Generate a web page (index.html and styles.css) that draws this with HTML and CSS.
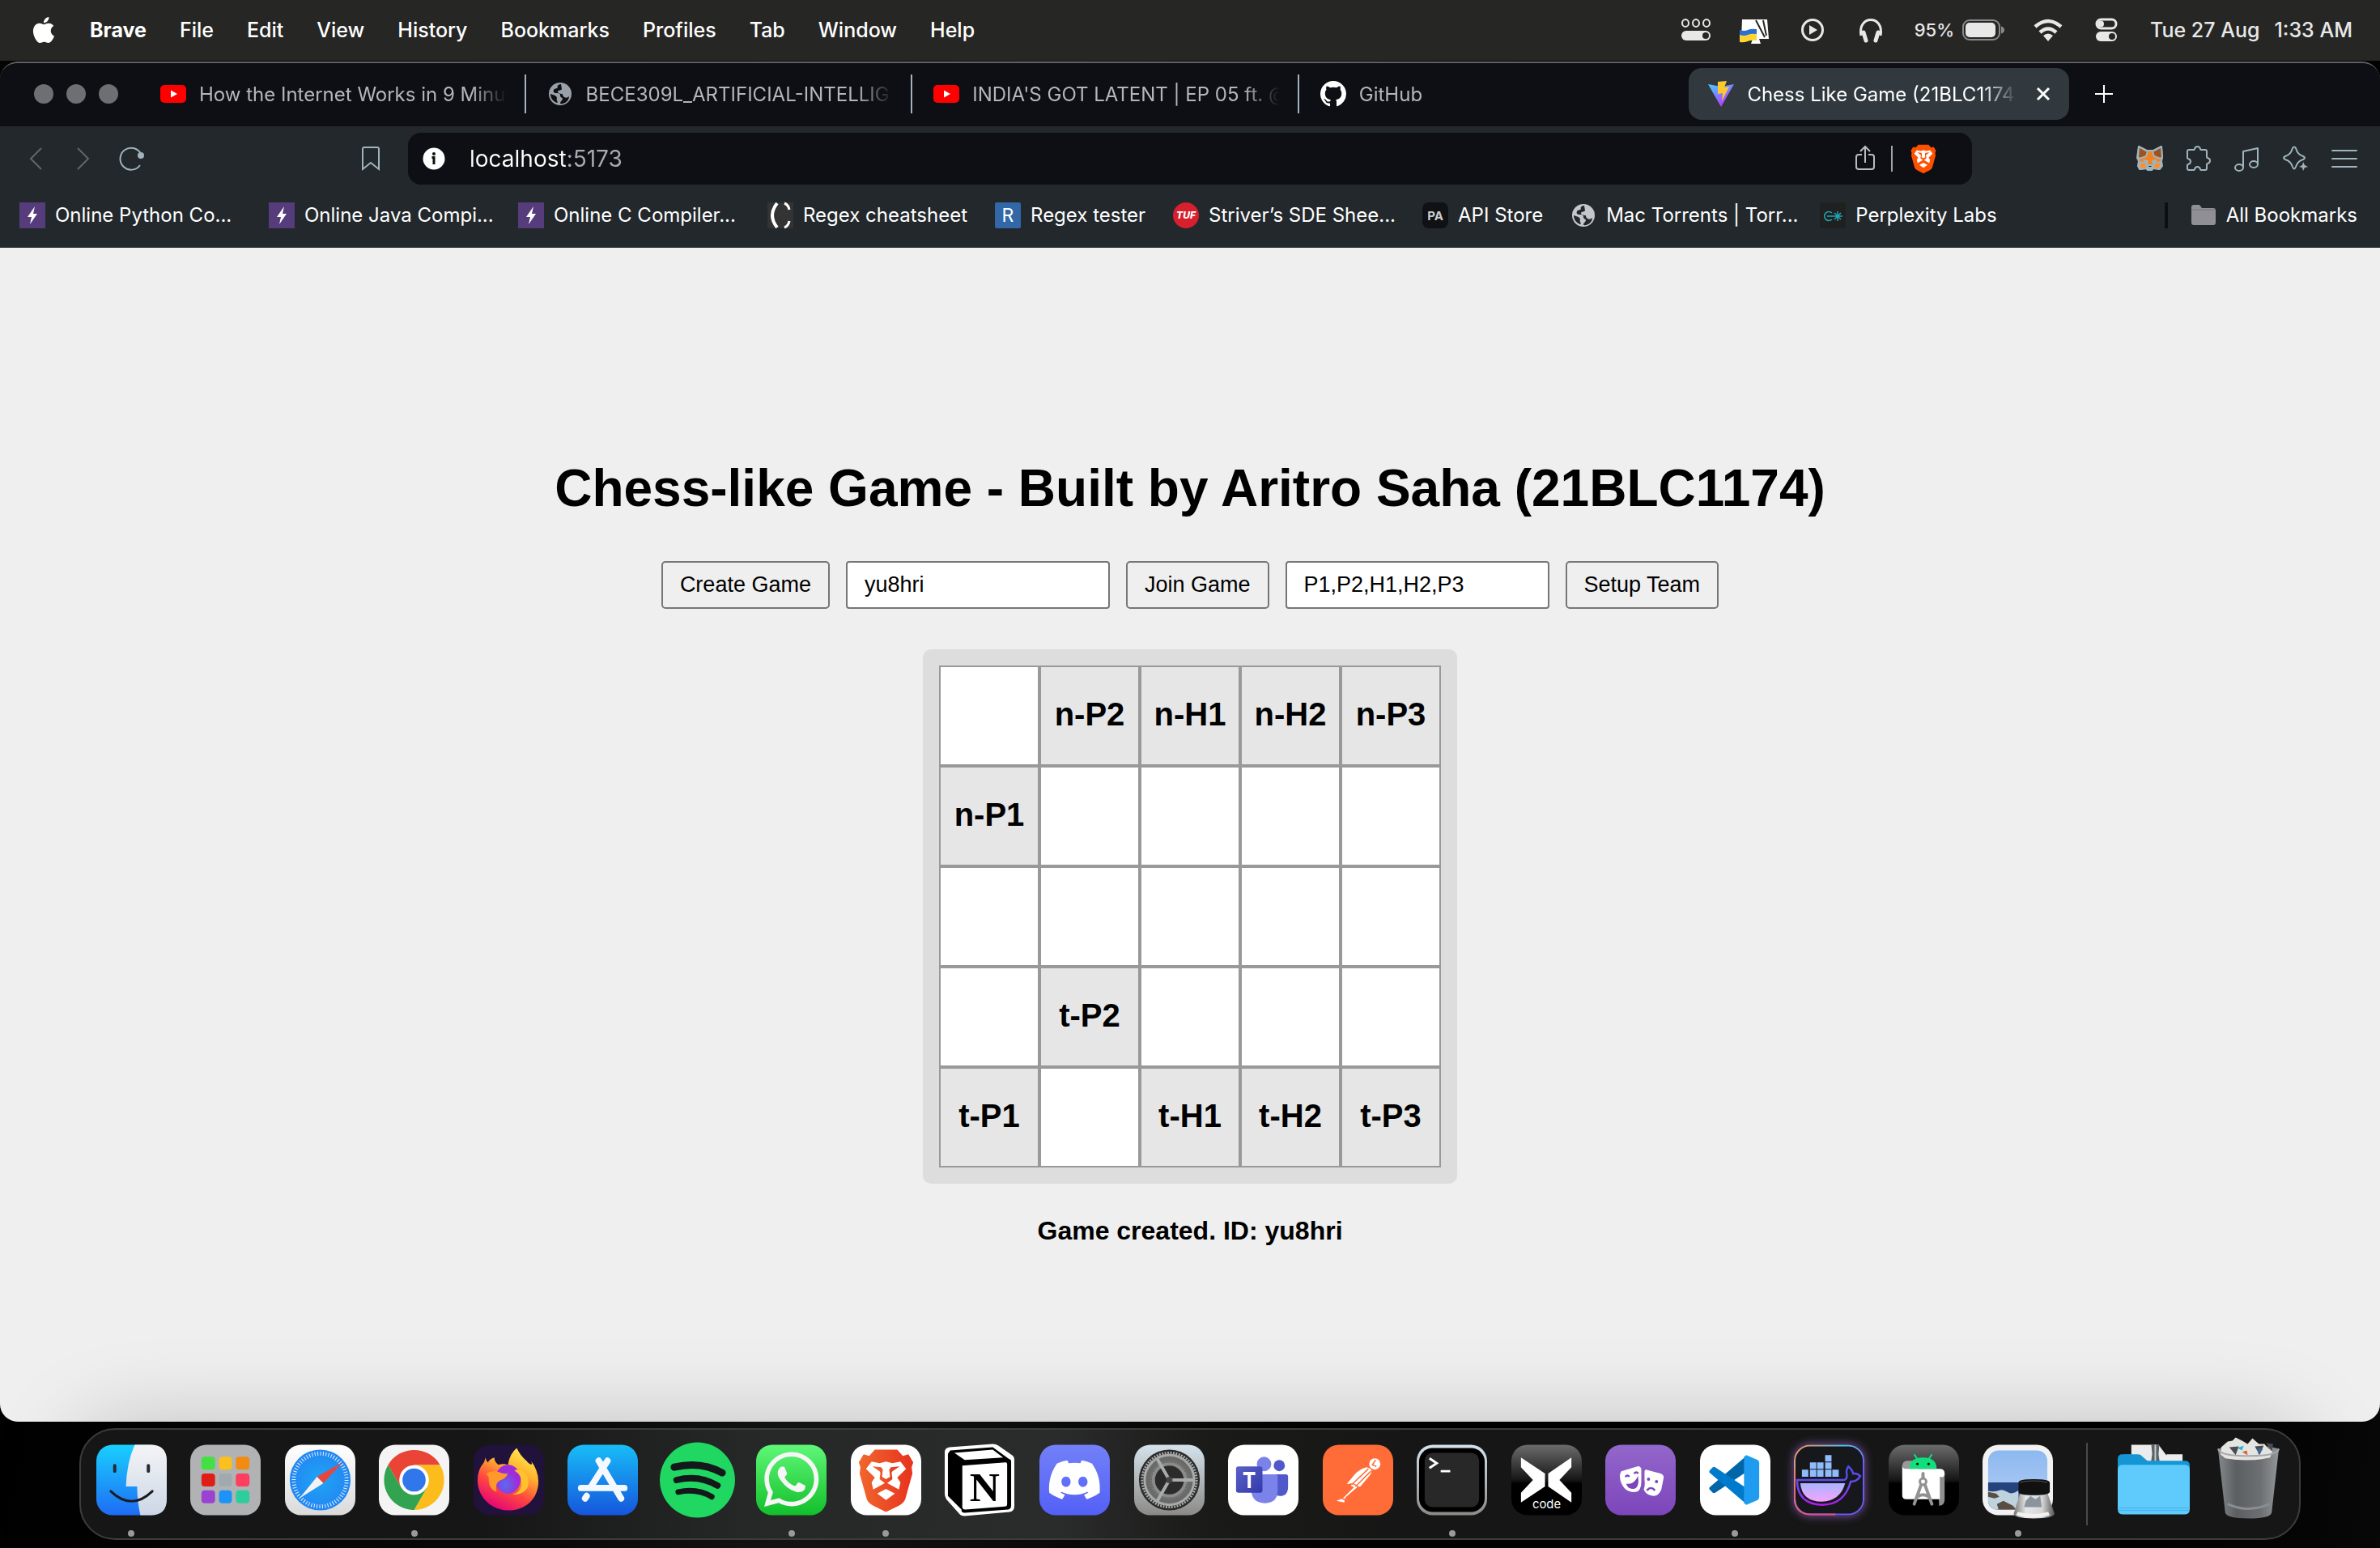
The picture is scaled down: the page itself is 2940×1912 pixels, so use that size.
FILE: index.html
```html
<!DOCTYPE html>
<html lang="en">
<head>
<meta charset="utf-8">
<title>Chess Like Game (21BLC1174)</title>
<link rel="stylesheet" href="styles.css">
</head>
<body>
<svg class="sprite" aria-hidden="true">
  <defs>
    <symbol id="youtube" viewBox="0 0 32 32"><rect y="5" width="32" height="22" rx="5" fill="#f00"/><path d="M13 11.500 21 16l-8 4.500z" fill="#fff"/></symbol>
    <symbol id="globe" viewBox="0 0 32 32"><circle cx="16" cy="16" r="14" fill="currentColor"/><path d="M17 4c-4 0-5 3-4 4s-4 1-5 3 0 4 3 4 5 0 5 3 3 2 3 4-3 3-3 6c6 1 11-4 11-9 0 0-3 3-6 1s-1-4-3-4-5-1-5-3 5-1 5-3z" fill="var(--hole)"/><path d="M4 16c2 1 5 1 7 3s0 3 1 5 1 3 0 3c-5-2-8-6-8-11z" fill="var(--hole)"/></symbol>
    <symbol id="bolt" viewBox="0 0 32 32"><path d="M0 0h32v32H0z" fill="#573c7c"/><path d="m19 5-9 13h5l-2 9 9-13h-5z" fill="#fff"/></symbol>
    <symbol id="lion" viewBox="0 0 88 88">
      <path d="M30 6h28l7 8 7-2 6 10-2 6 1 8-9 32q-2 5-8 8L44 84 28 76q-6-3-8-8l-9-32 1-8-2-6 6-10 7 2z" fill="var(--mane)"/>
      <path d="m26 21 10 2 8-2 8 2 10-2 7 9-11 11 4 6-2 9-16-9-16 9-2-9 4-6-11-11z" fill="var(--face)"/>
      <path d="m44 55 11 6-11 8-11-8z" fill="var(--face)"/>
      <path d="m27 27 11 1 2 3-1 9 5 3 5-3-1-9 2-3 11-1-9 6-1 2 1 8-8 6-8-6 1-8-1-2z" fill="var(--mane)"/>
    </symbol>
    <linearGradient id="gMane"><stop offset="0" stop-color="#f1672d"/><stop offset="1" stop-color="#e7321e"/></linearGradient>
    <linearGradient id="gFinder" x2="0" y2="1"><stop offset="0" stop-color="#19d0ff"/><stop offset="1" stop-color="#1e6cf5"/></linearGradient>
    <linearGradient id="gFace" x2="0" y2="1"><stop offset="0" stop-color="#f4f4f6"/><stop offset="1" stop-color="#ccd7e6"/></linearGradient>
    <linearGradient id="gWhite" x2="0" y2="1"><stop offset="0" stop-color="#fff"/><stop offset="1" stop-color="#dadada"/></linearGradient>
    <radialGradient id="gSafari"><stop offset="0" stop-color="#1ea5f5"/><stop offset="1" stop-color="#2386f2"/></radialGradient>
    <linearGradient id="gFox" x1=".8" y1="0" x2=".3" y2="1"><stop offset="0" stop-color="#fff44f"/><stop offset=".35" stop-color="#ffb02e"/><stop offset=".65" stop-color="#ff4a3d"/><stop offset="1" stop-color="#e3007c"/></linearGradient>
    <radialGradient id="gFoxCore" cx=".4" cy=".7"><stop offset="0" stop-color="#5a6bf0"/><stop offset="1" stop-color="#a02bd8"/></radialGradient>
    <linearGradient id="gStore" x2="0" y2="1"><stop offset="0" stop-color="#18bdf8"/><stop offset="1" stop-color="#1655dc"/></linearGradient>
    <linearGradient id="gWa" x2="0" y2="1"><stop offset="0" stop-color="#5ff777"/><stop offset="1" stop-color="#12bf2b"/></linearGradient>
    <linearGradient id="gDiscord" x2="0" y2="1"><stop offset="0" stop-color="#7380f8"/><stop offset="1" stop-color="#5360f6"/></linearGradient>
    <linearGradient id="gSteel" x2="0" y2="1"><stop offset="0" stop-color="#d5e3ec"/><stop offset="1" stop-color="#8c8a87"/></linearGradient>
    <linearGradient id="gTeams" x2="1" y2="1"><stop offset="0" stop-color="#5a62c9"/><stop offset="1" stop-color="#3339a8"/></linearGradient>
    <linearGradient id="gGloss" x2="0" y2="1"><stop offset="0" stop-color="#6c6c6c"/><stop offset=".5" stop-color="#161616"/><stop offset=".55" stop-color="#000"/></linearGradient>
    <linearGradient id="gPurple" x2="0" y2="1"><stop offset="0" stop-color="#9367cb"/><stop offset="1" stop-color="#7d45bb"/></linearGradient>
    <linearGradient id="gNeon" x2="1" y2="1"><stop offset="0" stop-color="#ff8c5a"/><stop offset=".35" stop-color="#5cc4f4"/><stop offset=".65" stop-color="#6a5cf0"/><stop offset="1" stop-color="#6a5cf0"/></linearGradient>
    <linearGradient id="gNeonSide" x2="0" y2="1"><stop offset="0" stop-color="#e88a68"/><stop offset="1" stop-color="#e0508c"/></linearGradient>
    <linearGradient id="gHull" x2="0" y2="1"><stop offset="0" stop-color="#a9b4ff"/><stop offset="1" stop-color="#f3a4ff"/></linearGradient>
    <linearGradient id="gHullLine" x2="0" y2="1"><stop offset="0" stop-color="#4a4cf0"/><stop offset=".5" stop-color="#6a4af4"/><stop offset="1" stop-color="#b31bf0"/></linearGradient>
    <linearGradient id="gSky" x2="0" y2="1"><stop offset="0" stop-color="#8db9f0"/><stop offset="1" stop-color="#b4cdf3"/></linearGradient>
    <linearGradient id="gBin"><stop offset="0" stop-color="#85898c"/><stop offset=".3" stop-color="#5b5f62"/><stop offset=".7" stop-color="#6c7073"/><stop offset="1" stop-color="#93979a"/></linearGradient>
    <linearGradient id="gGlass"><stop offset="0" stop-color="#777"/><stop offset=".3" stop-color="#e6e6e6"/><stop offset=".7" stop-color="#d5d5d5"/><stop offset="1" stop-color="#555"/></linearGradient>
  </defs>
</svg>

<div class="desktop">
  <header class="menubar">
    <nav class="menus" aria-label="Menu bar">
      <a href="#" class="apple" aria-label="Apple menu"><svg width="32" height="32" viewBox="0 0 24 24" fill="#fff"><path d="M12.152 6.896c-.948 0-2.415-1.078-3.960-1.040-2.040.027-3.910 1.183-4.961 3.014-2.117 3.675-.546 9.103 1.519 12.090 1.013 1.454 2.208 3.090 3.792 3.039 1.520-.065 2.090-.987 3.935-.987 1.831 0 2.350.987 3.960.948 1.637-.026 2.676-1.480 3.676-2.948 1.156-1.688 1.636-3.325 1.662-3.415-.039-.013-3.182-1.221-3.220-4.857-.026-3.040 2.480-4.494 2.597-4.559-1.429-2.090-3.623-2.324-4.390-2.376-2-.156-3.675 1.090-4.610 1.090zM15.530 3.830c.843-1.012 1.400-2.427 1.245-3.830-1.207.052-2.662.805-3.532 1.818-.780.896-1.454 2.338-1.273 3.714 1.338.104 2.715-.688 3.559-1.701"/></svg></a>
      <a href="#" class="app-name">Brave</a>
      <a href="#">File</a>
      <a href="#">Edit</a>
      <a href="#">View</a>
      <a href="#">History</a>
      <a href="#">Bookmarks</a>
      <a href="#">Profiles</a>
      <a href="#">Tab</a>
      <a href="#">Window</a>
      <a href="#">Help</a>
    </nav>
    <div class="status-items">
      <svg class="status-icon" viewBox="0 0 36 36" fill="none" stroke="#e8e8e8" stroke-width="2"><ellipse cx="5" cy="9.500" rx="4" ry="4.500"/><ellipse cx="18" cy="9.500" rx="4" ry="4.500"/><ellipse cx="31" cy="9.500" rx="4" ry="4.500"/><rect x="0" y="19" width="36" height="12" rx="6" fill="#e8e8e8" stroke="none"/><circle cx="30" cy="25" r="4" fill="#262625" stroke="none"/></svg>
      <svg class="status-icon" viewBox="0 0 36 36"><path d="M3 5h31l2 24H24l2 6H14l2-6H2z" fill="#fff"/><path d="m20 6 11 21M29 6l4 19" stroke="#262625" stroke-width="2"/><path d="M0 18q6 2 10 0t11-1v9q-6-1-11 0T0 26z" fill="#2d6fd0"/><path d="M0 24q6 2 10 0t11-1v8q-6-1-11 1T0 33z" fill="#fbd633"/></svg>
      <svg class="status-icon" viewBox="0 0 36 36"><circle cx="18" cy="18" r="12.500" fill="none" stroke="#e8e8e8" stroke-width="3"/><path d="m14 12 10 6-10 6z" fill="#e8e8e8"/></svg>
      <svg class="status-icon" viewBox="0 0 36 36" fill="none" stroke="#e8e8e8" stroke-width="3"><path d="M6 25c-5-26 29-26 24 0"/><path d="m9 21 3 10M27 21l-3 10" stroke-width="5" stroke-linecap="round"/></svg>
      <div class="battery"><span>95%</span><svg width="52" height="26" viewBox="0 0 52 26"><rect x="1" y="1" width="45" height="24" rx="8" fill="none" stroke="#8a8a8a" stroke-width="2"/><rect x="4" y="4" width="37" height="18" rx="5" fill="#e8e8e8"/><path d="M48 8.500q4 1 4 4.500t-4 4.500z" fill="#8a8a8a"/></svg></div>
      <svg class="status-icon" viewBox="0 0 36 36" fill="none" stroke="#e8e8e8" stroke-width="4.500"><path d="M2 14q16-14 32 0M8 21q10-9 20 0"/><path d="m18 32-6-7q6-5 12 0z" fill="#e8e8e8" stroke="none"/></svg>
      <svg class="status-icon" viewBox="0 0 36 36"><rect x="6" y="5" width="24" height="11" rx="5.500" fill="none" stroke="#e8e8e8" stroke-width="3"/><circle cx="11" cy="10.500" r="4" fill="#e8e8e8"/><rect x="5" y="20" width="26" height="12" rx="6" fill="#e8e8e8"/><circle cx="25" cy="26" r="4" fill="#262625"/></svg>
      <time class="clock"><span>Tue 27 Aug</span><span>1:33 AM</span></time>
    </div>
  </header>

  <section class="window" aria-label="Brave">
    <div class="tabstrip">
      <div class="lights">
        <button aria-label="Close"></button><button aria-label="Minimise"></button><button aria-label="Zoom"></button>
      </div>
      <nav class="tabs" aria-label="Tabs">
        <a href="#" class="tab"><svg class="fav"><use href="#youtube"/></svg><span class="tab-title">How the Internet Works in 9 Minut</span></a>
        <a href="#" class="tab"><svg class="fav globe-dim"><use href="#globe"/></svg><span class="tab-title">BECE309L_ARTIFICIAL-INTELLIG</span></a>
        <a href="#" class="tab"><svg class="fav"><use href="#youtube"/></svg><span class="tab-title">INDIA'S GOT LATENT | EP 05 ft. @</span></a>
        <a href="#" class="tab last"><svg class="fav" viewBox="0 0 16 16" fill="#fff"><path d="M8 0C3.580 0 0 3.580 0 8c0 3.540 2.290 6.530 5.470 7.590.400.070.550-.170.550-.380 0-.190-.010-.820-.010-1.490-2.010.370-2.530-.490-2.690-.940-.090-.230-.480-.940-.820-1.130-.280-.150-.680-.520-.010-.530.630-.010 1.080.580 1.230.820.720 1.210 1.870.870 2.330.660.070-.520.280-.870.510-1.070-1.780-.200-3.640-.890-3.640-3.950 0-.870.310-1.590.820-2.150-.080-.200-.360-1.020.080-2.120 0 0 .670-.210 2.200.820.640-.180 1.320-.270 2-.270.680 0 1.360.090 2 .270 1.530-1.040 2.200-.820 2.200-.820.440 1.100.160 1.920.080 2.120.510.560.820 1.270.820 2.150 0 3.070-1.870 3.750-3.650 3.950.290.250.540.730.540 1.480 0 1.070-.010 1.930-.010 2.200 0 .210.150.460.550.380A8.013 8.013 0 0016 8c0-4.420-3.580-8-8-8z"/></svg><span class="tab-title">GitHub</span></a>
        <div class="tab active">
          <svg class="fav" viewBox="0 0 32 32"><defs><linearGradient id="gVite" x2=".6" y2="1"><stop offset="0" stop-color="#41d1ff"/><stop offset="1" stop-color="#bd34fe"/></linearGradient></defs><path d="m0 4 16 28L32 4 16 7z" fill="url(#gVite)"/><path d="m12 1 11-1-3 8 6-1-9 18 1-10-6 1z" fill="#ffc92e"/></svg>
          <span class="tab-title">Chess Like Game (21BLC1174</span>
          <button class="tab-close" aria-label="Close tab"><svg width="16" height="16" viewBox="0 0 16 16" stroke="#fff" stroke-width="3"><path d="m1 1 14 14M15 1 1 15"/></svg></button>
        </div>
      </nav>
      <button class="new-tab" aria-label="New tab"><svg width="22" height="22" viewBox="0 0 22 22" stroke="#fff" stroke-width="2"><path d="M11 0v22M0 11h22"/></svg></button>
    </div>

    <div class="toolbar">
      <div class="nav-buttons">
        <button class="tool dim" aria-label="Back"><svg viewBox="0 0 32 32"><path d="M23 3 10 16l13 13"/></svg></button>
        <button class="tool dim" aria-label="Forward"><svg viewBox="0 0 32 32"><path d="m9 3 13 13L9 29"/></svg></button>
        <button class="tool" aria-label="Reload"><svg viewBox="0 0 32 32"><path d="M28 10A13.500 13.500 0 1 0 27 24"/><circle cx="28" cy="12" r="3" fill="currentColor"/></svg></button>
      </div>
      <button class="tool" aria-label="Bookmark this page"><svg viewBox="0 0 32 32"><path d="M6 4q0-2 2-2h16q2 0 2 2v25l-10-8-10 8z"/></svg></button>
      <div class="address">
        <svg width="28" height="28" viewBox="0 0 28 28"><circle cx="14" cy="14" r="13.500" fill="#fff"/><circle cx="14" cy="8" r="2" fill="#0e0f14"/><path d="M11.500 12.500H14V21" stroke="#0e0f14" stroke-width="3" fill="none"/></svg>
        <input class="url" type="text" value="localhost:5173" aria-label="Address">
        <button class="tool share" aria-label="Share"><svg viewBox="0 0 32 32"><path d="M12 11H8q-3 0-3 3v12q0 3 3 3h16q3 0 3-3V14q0-3-3-3h-4M16 21V2M10 7l6-6 6 6"/></svg></button>
        <span class="address-rule"></span>
        <button class="shield" aria-label="Brave Shields"><svg width="40" height="40"><use href="#lion"/></svg></button>
      </div>
      <div class="extensions">
        <button class="tool" aria-label="MetaMask"><svg viewBox="0 0 32 32" stroke="none"><path d="m2 1 10 5h8l10-5 1 14-1 4 1 6-3 4-7-2-3 3h-5l-3-3-7 2-2-4 1-6-2-4z" fill="#f28220"/><path d="m2 1 11 6-2 6-8 3-2-2zM30 1 19 7l2 6 8 3 2-2z" fill="#9c5324"/><path d="m3 20 9 2v6l-7 1-2-4zM29 20l-9 2v6l7 1 2-4z" fill="#ff8d2a"/><path d="m8 18 5 1-1 2zM24 18l-5 1 1 2z" fill="#5a4a4a"/><path d="m11 25 2-1h6l2 1-3 4h-4z" fill="#d8c3b6"/><path d="M13 24h6l-1 3h-4z" fill="#161616"/></svg></button>
        <button class="tool" aria-label="Extensions"><svg viewBox="0 0 32 32"><path d="M4 5h6q1 0 1-1c1-4 6-4 7 0q0 1 1 1h5q2 0 2 2v7q0 1 1 1c4 1 4 6 0 7q-1 0-1 1v5q0 2-2 2h-5q-1 0-1-1c-1-4-6-4-7 0q0 1-1 1H4q-2 0-2-2v-4q0-1 1-1c4-1 4-6 0-7q-1 0-1-1V7q0-2 2-2z"/></svg></button>
        <button class="tool" aria-label="Playlist"><svg viewBox="0 0 32 32"><ellipse cx="6" cy="27" rx="5" ry="4"/><ellipse cx="24" cy="23" rx="5" ry="4"/><path d="M11 27V7l18-4v20M11 12"/></svg></button>
        <button class="tool" aria-label="Leo AI"><svg viewBox="0 0 32 32"><path d="M12 3q2-3 4 0 2 8 9 10 4 2 0 4-7 2-9 9-2 5-4 0-2-7-9-9-4-2 0-4 7-2 9-10z"/><path d="M25 20l2 4 4 2-4 1-2 4-1-4-4-1 4-2z" fill="currentColor" stroke="none"/></svg></button>
        <button class="tool" aria-label="Menu"><svg viewBox="0 0 32 32"><path d="M1 6h30M1 16h30M1 26h30"/></svg></button>
      </div>
    </div>

    <nav class="bookmarks" aria-label="Bookmarks">
      <a href="#" class="long"><svg class="fav"><use href="#bolt"/></svg>Online Python Co...</a>
      <a href="#" class="long"><svg class="fav"><use href="#bolt"/></svg>Online Java Compi...</a>
      <a href="#" class="long"><svg class="fav"><use href="#bolt"/></svg>Online C Compiler...</a>
      <a href="#"><svg class="fav" viewBox="0 0 32 32"><path d="M0 0h32v32H0z" fill="#333"/><path d="M12 1Q0 16 12 31" fill="none" stroke="#fff" stroke-width="4"/><path d="M21 1q5 2 6 8M27 23q-1 6-6 8" fill="none" stroke="#fff" stroke-width="3"/></svg>Regex cheatsheet</a>
      <a href="#"><svg class="fav" viewBox="0 0 32 32"><rect width="32" height="32" rx="2" fill="#3267a8"/><text x="16" y="24" text-anchor="middle" font-size="23" fill="#fff">R</text></svg>Regex tester</a>
      <a href="#" class="long"><svg class="fav" viewBox="0 0 32 32"><circle cx="16" cy="16" r="16" fill="#d71f2e"/><text x="16" y="20" text-anchor="middle" font-size="12" font-weight="800" font-style="italic" fill="#fff">TUF</text></svg>Striver’s SDE Shee...</a>
      <a href="#"><svg class="fav" viewBox="0 0 32 32"><rect width="32" height="32" rx="8" fill="#101114"/><text x="16" y="22" text-anchor="middle" font-size="15" font-weight="700" fill="#ccc">PA</text></svg>API Store</a>
      <a href="#" class="long"><svg class="fav globe-light"><use href="#globe"/></svg>Mac Torrents | Torr...</a>
      <a href="#"><svg class="fav" viewBox="0 0 32 32" fill="none" stroke="#20a5b5" stroke-width="1.500"><path d="M0 0h32v32H0z" fill="#202020" stroke="none"/><path d="M15 13a5.500 5.500 0 1 0 0 8M9 17h19M22 11v12M18 13l8 8M26 13l-8 8"/></svg>Perplexity Labs</a>
      <span class="bookmark-rule"></span>
      <a href="#"><svg class="fav" viewBox="0 0 32 32"><path d="M1 6q0-3 3-3h7l3 4h14q3 0 3 3v15q0 3-3 3H4q-3 0-3-3z" fill="#8f8f95"/><path d="M1 9h30" stroke="#77777c"/></svg>All Bookmarks</a>
    </nav>

    <main class="page">
      <h1>Chess-like Game - Built by Aritro Saha (21BLC1174)</h1>
      <form class="controls">
        <button type="button">Create Game</button>
        <input type="text" value="yu8hri" aria-label="Game ID">
        <button type="button">Join Game</button>
        <input type="text" value="P1,P2,H1,H2,P3" aria-label="Team">
        <button type="button">Setup Team</button>
      </form>
      <div class="board">
        <div class="cell"></div><div class="cell piece">n-P2</div><div class="cell piece">n-H1</div><div class="cell piece">n-H2</div><div class="cell piece">n-P3</div>
        <div class="cell piece">n-P1</div><div class="cell"></div><div class="cell"></div><div class="cell"></div><div class="cell"></div>
        <div class="cell"></div><div class="cell"></div><div class="cell"></div><div class="cell"></div><div class="cell"></div>
        <div class="cell"></div><div class="cell piece">t-P2</div><div class="cell"></div><div class="cell"></div><div class="cell"></div>
        <div class="cell piece">t-P1</div><div class="cell"></div><div class="cell piece">t-H1</div><div class="cell piece">t-H2</div><div class="cell piece">t-P3</div>
      </div>
      <p class="message">Game created. ID: yu8hri</p>
    </main>
  </section>

  <footer class="dock">
    <div class="apps">
      <button class="app running" aria-label="Finder"><svg viewBox="0 0 88 88"><rect width="88" height="88" rx="20" fill="url(#gFinder)"/><path d="M48 0h20q20 0 20 20v48q0 20-20 20H55q-4-18-4-36H37Q38 22 48 0z" fill="url(#gFace)"/><path d="M23 26v7M65 26v7" stroke="#222b33" stroke-width="4" stroke-linecap="round"/><path d="M18 58q26 25 52 0" fill="none" stroke="#1c1c20" stroke-width="3" stroke-linecap="round"/></svg></button>
      <button class="app" aria-label="Launchpad"><svg viewBox="0 0 88 88"><rect width="88" height="88" rx="20" fill="#b1b2b3"/><rect x="14" y="15" width="17" height="16" rx="4" fill="#43e043"/><rect x="36" y="15" width="16" height="16" rx="4" fill="#fcc01c"/><rect x="57" y="15" width="17" height="16" rx="4" fill="#f28b12"/><rect x="14" y="36" width="17" height="16" rx="4" fill="#de1e17"/><rect x="36" y="36" width="16" height="16" rx="4" fill="#a0a9ad"/><rect x="57" y="36" width="17" height="16" rx="4" fill="#fd3e5e"/><rect x="14" y="57" width="17" height="16" rx="4" fill="#9c42d2"/><rect x="36" y="57" width="16" height="16" rx="4" fill="#1c93f8"/><rect x="57" y="57" width="17" height="16" rx="4" fill="#2fcd9c"/></svg></button>
      <button class="app" aria-label="Safari"><svg viewBox="0 0 88 88"><rect width="88" height="88" rx="20" fill="url(#gWhite)"/><circle cx="44" cy="44" r="38" fill="url(#gSafari)"/><circle cx="44" cy="44" r="33" fill="none" stroke="#e8f4ff" stroke-width="5" stroke-dasharray="1 2.450"/><path d="m72 22-24 26-8-8z" fill="#e8463c"/><path d="m18 67 22-27 8 8z" fill="#f2f2f2"/></svg></button>
      <button class="app running" aria-label="Chrome"><svg viewBox="0 0 88 88"><rect width="88" height="88" rx="20" fill="#f4f4f4"/><path d="M11.500 25.250a37.500 37.500 0 0 1 65 0H44L27.800 53.400z" fill="#e94435"/><path d="M76.500 25.250A37.500 37.500 0 0 1 44 81.500l16.200-28.100L44 25.250z" fill="#fbbc1c"/><path d="M44 81.500a37.500 37.500 0 0 1-32.500-56.250L27.800 53.400h32.400z" fill="#32a350"/><circle cx="44" cy="44" r="18.500" fill="#fff"/><circle cx="44" cy="44" r="14.500" fill="#2f77ea"/></svg></button>
      <button class="app" aria-label="Firefox"><svg viewBox="0 0 88 88"><rect width="88" height="88" rx="20" fill="#20123a"/><path d="M54 4q4 9 12 16 5 6 7 4 0-3-2-5 10 13 10 27c0 22-17 36-37 36S5 67 5 44q0-13 8-22l2-6q1 5 3 6 2-4 8-6 0 6 5 9 6-2 12 0 2-14 11-21z" fill="url(#gFox)"/><ellipse cx="43" cy="43" rx="16" ry="18" fill="url(#gFoxCore)"/><path d="M16 36q8-5 15-2 6 3 12 2-3 7-11 9-6 5-3 14-11-4-10-18z" fill="#ff9a2a"/><path d="M51 32q10 6 9 18-2 10-11 12 14 1 19-10 3-12-6-19-5-3-11-1z" fill="#ffc22e"/></svg></button>
      <button class="app" aria-label="App Store"><svg viewBox="0 0 88 88"><rect width="88" height="88" rx="20" fill="url(#gStore)"/><g stroke="#f4f9ff" stroke-width="8" stroke-linecap="round"><path d="M50 20 29 53M39 20l28 47M17 54h54M24 64l-2 3"/></g></svg></button>
      <button class="app" aria-label="Spotify"><svg viewBox="0 0 88 88"><circle cx="44" cy="44" r="47" fill="#1fd761"/><g fill="none" stroke="#14181a" stroke-linecap="round"><path d="M15 28q33-8 60 7" stroke-width="9"/><path d="M18 44q28-7 51 7" stroke-width="8"/><path d="M20 59q24-5 42 6" stroke-width="7"/></g></svg></button>
      <button class="app running" aria-label="WhatsApp"><svg viewBox="0 0 88 88"><rect width="88" height="88" rx="20" fill="url(#gWa)"/><path transform="translate(10 9) scale(2.850)" fill="#f6f6f6" d="M17.472 14.382c-.297-.149-1.758-.867-2.030-.967-.273-.099-.471-.148-.670.150-.197.297-.767.966-.940 1.164-.173.199-.347.223-.644.075-.297-.150-1.255-.463-2.390-1.475-.883-.788-1.480-1.761-1.653-2.059-.173-.297-.018-.458.130-.606.134-.133.298-.347.446-.520.149-.174.198-.298.298-.497.099-.198.050-.371-.025-.520-.075-.149-.669-1.612-.916-2.207-.242-.579-.487-.500-.669-.510-.173-.008-.371-.010-.570-.010-.198 0-.520.074-.792.372-.272.297-1.040 1.016-1.040 2.479 0 1.462 1.065 2.875 1.213 3.074.149.198 2.096 3.200 5.077 4.487.709.306 1.262.489 1.694.625.712.227 1.360.195 1.871.118.571-.085 1.758-.719 2.006-1.413.248-.694.248-1.289.173-1.413-.074-.124-.272-.198-.570-.347m-5.421 7.403h-.004a9.870 9.870 0 01-5.031-1.378l-.361-.214-3.741.982.998-3.648-.235-.374a9.860 9.860 0 01-1.510-5.260c.001-5.450 4.436-9.884 9.888-9.884 2.640 0 5.122 1.030 6.988 2.898a9.825 9.825 0 012.893 6.994c-.003 5.450-4.437 9.884-9.885 9.884m8.413-18.297A11.815 11.815 0 0012.050 0C5.495 0 .160 5.335.157 11.892c0 2.096.547 4.142 1.588 5.945L.057 24l6.305-1.654a11.882 11.882 0 005.683 1.448h.005c6.554 0 11.890-5.335 11.893-11.893a11.821 11.821 0 00-3.480-8.413Z"/></svg></button>
      <button class="app running brave" aria-label="Brave"><svg viewBox="0 0 88 88"><rect width="88" height="88" rx="20" fill="#fff"/><use href="#lion"/></svg></button>
      <button class="app" aria-label="Notion"><svg viewBox="0 0 88 88"><path d="M6 3 60-1q4 0 7 2l17 12q3 2 3 6v58q0 6-6 7l-56 5q-5 0-7-3L2 68q-2-3-2-7V9q0-5 6-6z" fill="#fff"/><path d="m7 7 53-4 22 16-2 2-58 4v57L4 64V11z" fill="#000"/><path d="m12 10 48-4 13 10-48 3z" fill="#fff"/><path d="m21 22 59-4q3 0 3 3v55q0 4-4 5l-54 4q-4 0-4-3z" fill="#000"/><path d="m22 26 54-4q2 0 2 2v50q0 3-3 3l-49 4q-4 0-4-3z" fill="#fff"/><text x="50" y="70" text-anchor="middle" class="serif-mark">N</text></svg></button>
      <button class="app" aria-label="Discord"><svg viewBox="0 0 88 88"><rect width="88" height="88" rx="20" fill="url(#gDiscord)"/><path transform="translate(12 12) scale(2.650)" fill="#fff" d="M20.317 4.370a19.790 19.790 0 00-4.885-1.515.074.074 0 00-.079.037c-.211.375-.445.865-.608 1.250-1.845-.276-3.680-.276-5.487 0-.164-.393-.406-.874-.618-1.250a.077.077 0 00-.079-.037 19.736 19.736 0 00-4.885 1.515.070.070 0 00-.032.028C.533 9.046-.319 13.580.099 18.058a.082.082 0 00.031.056c2.053 1.508 4.041 2.423 5.993 3.029a.078.078 0 00.084-.028c.462-.630.873-1.295 1.226-1.994a.076.076 0 00-.042-.106c-.653-.248-1.274-.550-1.872-.892a.077.077 0 01-.008-.128c.126-.094.252-.192.372-.291a.074.074 0 01.078-.011c3.928 1.793 8.180 1.793 12.061 0a.074.074 0 01.079.010c.120.099.246.198.373.292a.077.077 0 01-.007.128 12.299 12.299 0 01-1.873.891.077.077 0 00-.041.107c.360.698.772 1.363 1.225 1.993a.076.076 0 00.084.029c1.961-.607 3.950-1.522 6.002-3.029a.077.077 0 00.031-.055c.500-5.177-.838-9.674-3.549-13.660a.061.061 0 00-.031-.029zM8.020 15.331c-1.183 0-2.157-1.086-2.157-2.419 0-1.333.956-2.419 2.157-2.419 1.211 0 2.176 1.095 2.157 2.419 0 1.333-.956 2.419-2.157 2.419zm7.975 0c-1.183 0-2.157-1.086-2.157-2.419 0-1.333.955-2.419 2.157-2.419 1.211 0 2.176 1.095 2.157 2.419 0 1.333-.946 2.419-2.157 2.419Z"/></svg></button>
      <button class="app" aria-label="System Settings"><svg viewBox="0 0 88 88"><rect width="88" height="88" rx="20" fill="url(#gSteel)"/><circle cx="44" cy="44" r="38" fill="#2b2b2b"/><g fill="none" stroke="#a9abab"><circle cx="44" cy="44" r="34" stroke-width="3" stroke-dasharray="2 1.500"/><circle cx="44" cy="44" r="26" stroke="#6a6a68" stroke-width="8"/><circle cx="44" cy="44" r="31" stroke-width="3"/><circle cx="44" cy="44" r="23" stroke="#777" stroke-width="3" stroke-dasharray="2 1.500"/><circle cx="44" cy="44" r="20" stroke="#8b8b8b" stroke-width="4"/><path d="M44 44h30M44 44 29 18M44 44 29 70" stroke-width="4"/></g><circle cx="44" cy="44" r="4" fill="#444"/></svg></button>
      <button class="app" aria-label="Teams"><svg viewBox="0 0 88 88"><rect width="88" height="88" rx="20" fill="#fff"/><circle cx="64" cy="26" r="7" fill="#5059c9"/><path d="M58 37h14q3 0 3 3v12q0 12-10 12-5 0-7-3z" fill="#5059c9"/><circle cx="45" cy="24" r="9" fill="#7b83eb"/><path d="M29 37h30q3 0 3 3v17q0 16-16 16T29 57z" fill="#7b83eb"/><rect x="10" y="27" width="33" height="33" rx="3" fill="url(#gTeams)"/><path d="M19 36h15M26.500 36v18" stroke="#fff" stroke-width="4"/></svg></button>
      <button class="app" aria-label="Postman"><svg viewBox="0 0 88 88"><rect width="88" height="88" rx="20" fill="#ff6c37"/><circle cx="65" cy="24" r="7" fill="#fff"/><path d="M55 28q-9 2-15 9L30 49l7-1-2 3 4 2-14 14-8 3 10 2 1-6 15-13 4-1 12-14q3-5 1-8z" fill="#fff"/><path d="M57 30 36 50M60 33 41 52M37 48l8 5M24 67l4 2M66 19l-4 6 5 2" fill="none" stroke="#ff6c37" stroke-width="1.500"/></svg></button>
      <button class="app running" aria-label="Terminal"><svg viewBox="0 0 88 88"><rect width="88" height="88" rx="20" fill="url(#gSteel)"/><rect x="3" y="4" width="82" height="80" rx="17" fill="#000"/><rect x="10" y="10" width="68" height="68" rx="10" fill="#282828"/><path d="m16 17 9 6-9 6M30 33h12" fill="none" stroke="#fff" stroke-width="3"/></svg></button>
      <button class="app" aria-label="CapCode"><svg viewBox="0 0 88 88"><rect width="88" height="88" rx="20" fill="url(#gGloss)"/><path d="m12 16 30 20v16L12 72V60l15-16-15-16zM75 16 46 36v16l29 20V60L60 44l15-16z" fill="#fff"/><text x="44" y="79" text-anchor="middle" font-size="15" fill="#fff">code</text></svg></button>
      <button class="app" aria-label="Masks"><svg viewBox="0 0 88 88"><rect width="88" height="88" rx="20" fill="url(#gPurple)"/><path d="m20 33 20-6q4-1 5 4v15q0 12-7 13c-9 1-16-4-19-14q-2-8 1-12z" fill="#fff"/><path d="m51 31 18 5q4 1 4 5l-3 15q-3 8-10 8-9-1-12-8 2-5 1-12V34q0-3 2-3z" fill="#fff"/><path d="M25 40q3-3 5 0M36 36q3-3 5 0M28 50q8 0 12-7 1 10-5 11-5 0-7-4zM52 57q5-6 10 0" fill="none" stroke="#7d45bb" stroke-width="2.500"/><path d="M28 50q8 0 12-7 1 10-5 11-5 0-7-4z" fill="#7d45bb"/><circle cx="54" cy="43" r="2" fill="#7d45bb"/><circle cx="64" cy="46" r="2" fill="#7d45bb"/></svg></button>
      <button class="app running" aria-label="Visual Studio Code"><svg viewBox="0 0 88 88"><rect width="88" height="88" rx="20" fill="#fff"/><path d="M58 14v20L19 60q-2 1-3 0l-4-4q-1-2 0-3z" fill="#0065a9"/><path d="M58 74V54L19 28q-2-1-3 0l-4 4q-1 2 0 3z" fill="#007acc"/><path d="m58 13 14 6q2 1 2 4v42q0 3-2 4l-14 6-3-2V15z" fill="#1f9cf0"/></svg></button>
      <button class="app neon" aria-label="Docker"><svg viewBox="0 0 88 88"><rect x="1" y="1" width="86" height="86" rx="19" fill="#17181c" stroke="url(#gNeon)" stroke-width="2"/><path d="M1 28v38q0 21 21 21h30" fill="none" stroke="url(#gNeonSide)" stroke-width="2"/><g fill="#8fbcfd"><path d="M10 31h8v9h-8zM20 31h8v9h-8zM29 31h8v9h-8zM39 31h8v9h-8zM48 31h8v9h-8zM20 22h8v8h-8zM29 22h8v8h-8zM39 22h8v8h-8zM39 13h8v8h-8z"/></g><path d="M4 44h58q5 0 4-8-1-5 2-9 5 4 6 9 5-1 9 3-4 7-12 7-8 29-36 29Q4 74 4 44z" fill="none" stroke="url(#gHullLine)" stroke-width="2.500"/><path d="M8 48h56Q58 70 35 71 10 71 8 48z" fill="url(#gHull)"/></svg></button>
      <button class="app" aria-label="Android Studio"><svg viewBox="0 0 88 88"><rect width="88" height="88" rx="20" fill="url(#gGloss)"/><rect x="17" y="20" width="20" height="14" rx="6" fill="#999"/><path d="M62 36h8v32q0 8-7 8z" fill="#8e8e8e"/><path d="M17 26q0 4 5 4h42q6 0 6 6t-6 4v28H22q-5 0-5-5z" fill="#fff"/><path d="M26 30q0-14 17-14t17 14z" fill="#0fe07c"/><path d="m36 18-4-6M50 18l4-6" stroke="#0fe07c" stroke-width="2"/><circle cx="36" cy="24" r="1.500"/><circle cx="50" cy="24" r="1.500"/><path d="M43 36v6M41 49 32 74M45 49l9 25M36 65q7-5 14 0" fill="none" stroke="#929292" stroke-width="4" stroke-linecap="round"/><circle cx="43" cy="46" r="4" fill="#fff" stroke="#929292" stroke-width="3"/></svg></button>
      <button class="app running" aria-label="Preview"><svg viewBox="0 0 88 88"><rect width="88" height="88" rx="20" fill="#f2f2f3"/><rect x="7" y="7" width="74" height="74" rx="13" fill="url(#gSky)"/><path d="M7 47h74v20q0 14-14 14H20Q7 81 7 68z" fill="#26437d"/><path d="M7 58q10 1 14-1t10 2 14-2v24H20Q7 81 7 68z" fill="#bfd3de"/><path d="m7 59 10 2 4 4-6 2-8-2zM18 74l8-4 12 6 4 5H20z" fill="#5a4d42"/><path d="m47 60-8 26q0 6 25 6t26-6l-9-26z" fill="url(#gGlass)"/><path d="m54 70 6-6 6 4 6-4 2 14H52z" fill="#8b949c"/><path d="M44 84q20 5 38 0l2 4q-22 6-42 0z" fill="#f2f2f2"/><path d="M45 47q0-4 19-4t20 4v12q-1 4-20 4t-19-4z" fill="#111"/><path d="M47 47q17-4 34 0" fill="none" stroke="#555"/></svg></button>
    </div>
    <span class="dock-rule"></span>
    <button class="app slot" aria-label="Downloads"><svg viewBox="0 0 88 88"><path d="M8 12h8v20H8z" fill="#666"/><path d="M16 0h34l18 24v12H16zM60 12h20v20H60z" fill="#ececec"/><path d="M41 0h10l-1 12 3 20H39l3-20z" fill="#59646a"/><path d="M46 0v30" stroke="#ccc" stroke-width="2"/><path d="M-1 18q0-6 6-6h19q4 0 6 3l6 5h47q6 0 6 6v20H-1z" fill="#1496d4"/><path d="M-1 32q0-7 6-7h78q6 0 6 7v48q0 7-6 7H5q-6 0-6-7z" fill="#5fcbfd"/><path d="M0 79h88M0 82h88" stroke="#42b1e8"/></svg></button>
    <button class="app slot" aria-label="Bin"><svg viewBox="0 0 88 88"><path d="M6 5q38-10 76 0l-9 80q-2 7-29 7t-29-7z" fill="url(#gBin)"/><path d="m10 3 8-7 6-1 4-4 8 4 7 4 6-7 8 7 7 0 4 5 6 4-3 8q-27 6-56 1l-6-5z" fill="#e4e4e2"/><path d="m20 3 8 10 4-11zM52 2l6 11 5-12zM66-2l7 10 2-9zM32-5l8 6" fill="#4c4c50"/><path d="m30 4 8-3-2 6z" fill="#22b8d8"/><path d="m36 9 6-2 1 6z" fill="#d8622c"/><path d="m56 4 6 2-6 6z" fill="#3a6aa8"/><path d="M6 5q2 9 38 9t38-9" fill="none" stroke="#a5a8aa" stroke-width="2"/><path d="M18 74q26 12 52 0" fill="none" stroke="#8a8e91" stroke-width="3"/></svg></button>
  </footer>
</div>
</body>
</html>
```
FILE: styles.css
```css
* {
  box-sizing: border-box;
}

body {
  margin: 0;
  background: #020202;
  color: #fff;
  font-family: Inter, "Liberation Sans", sans-serif;
}

a {
  color: inherit;
  text-decoration: none;
}

button {
  margin: 0;
  padding: 0;
  border: 0;
  background: none;
  color: inherit;
  font: inherit;
}

svg {
  display: block;
  flex: none;
  overflow: visible;
}

.sprite {
  position: absolute;
  width: 0;
  height: 0;
}

.desktop {
  display: flex;
  flex-direction: column;
  min-height: 100vh;
  padding-bottom: 10px;
  background: linear-gradient(100deg, #050505, #010101 10%, #0a0a0a 30%, #161616 40%, #0c0c0c 50%, #020202 60%, #010101 90%, #080808);
}

/* Menu bar */

.menubar {
  display: flex;
  align-items: center;
  justify-content: space-between;
  height: 75px;
  padding: 0 34px 2px 38px;
  background: #262625;
  font-size: 25px;
  font-weight: 500;
}

.menus {
  display: flex;
  align-items: center;
  gap: 41px;
}

.app-name {
  font-weight: 700;
}

.status-items {
  display: flex;
  align-items: center;
  gap: 36px;
  color: #e8e8e8;
}

.status-icon {
  width: 36px;
  height: 36px;
}

.battery {
  display: flex;
  align-items: center;
  gap: 10px;
  font-size: 22px;
}

.clock {
  display: flex;
  gap: 18px;
}

/* Browser window */

.window {
  display: flex;
  flex: 1;
  flex-direction: column;
  margin: 1px 0 8px;
  border-top: 2px solid #5f6064;
  border-radius: 22px;
  overflow: hidden;
  background: #22282c;
}

.tabstrip {
  display: flex;
  align-items: center;
  height: 78px;
  padding-bottom: 2px;
  background: #0e0f14;
}

.lights {
  display: flex;
  gap: 16px;
  width: 172px;
  padding-left: 42px;
}

.lights button {
  width: 24px;
  height: 24px;
  border-radius: 50%;
  background: #6e6f73;
}

.tabs {
  display: grid;
  flex: 1;
  grid-template-columns: repeat(5, 1fr);
  align-items: center;
}

.tab {
  display: flex;
  align-items: center;
  gap: 16px;
  height: 48px;
  padding: 0 22px 0 26px;
  border-right: 2px solid #a0b4bc;
  color: #b4b6ba;
  font-size: 24px;
  min-width: 0;
}

.tab.last {
  border-right-color: transparent;
}

.tab.active {
  height: 64px;
  margin: 0 4px;
  padding: 0 24px;
  border: 0;
  border-radius: 16px;
  background: #31393e;
  color: #fff;
}

.tab-title {
  flex: 1;
  min-width: 0;
  overflow: hidden;
  white-space: nowrap;
  mask-image: linear-gradient(to left, transparent, #000 44px);
}

.tab-close {
  padding-left: 8px;
}

.fav {
  width: 32px;
  height: 32px;
}

.globe-dim {
  color: #9aa0a8;
  --hole: #0e0f14;
}

.globe-light {
  color: #c4c7cb;
  --hole: #22282c;
}

.new-tab {
  width: 380px;
  padding-left: 28px;
}

/* Toolbar */

.toolbar {
  display: flex;
  align-items: center;
  height: 80px;
  padding: 0 28px;
}

.tool {
  width: 32px;
  height: 32px;
  color: #a0b4bc;
}

.tool svg {
  width: 32px;
  height: 32px;
  fill: none;
  stroke: currentColor;
  stroke-width: 2;
}

.tool.dim {
  color: #5d686e;
}

.nav-buttons {
  display: flex;
  gap: 27px;
  width: 414px;
}

.address {
  display: flex;
  flex: 1;
  align-items: center;
  height: 64px;
  margin: 0 204px 0 30px;
  padding: 0 40px 0 18px;
  border-radius: 16px;
  background: #0e0f14;
}

.url {
  flex: 1;
  min-width: 0;
  margin-left: 30px;
  padding: 0;
  border: 0;
  outline: 0;
  background: linear-gradient(90deg, #fff 122px, #a9abb0 122px);
  background-clip: text;
  color: transparent;
  font: 28px/34px Inter, "Liberation Sans", sans-serif;
}

.share {
  color: #b9bcc0;
}

.address-rule {
  width: 2px;
  height: 32px;
  margin: 0 18px 0 16px;
  background: #a0a4a8;
}

.shield {
  --mane: #ff5000;
  --face: #fff;
}

.extensions {
  display: flex;
  gap: 28px;
}

.extensions .tool svg {
  stroke-linejoin: round;
  stroke-linecap: round;
}

/* Bookmarks */

.bookmarks {
  display: flex;
  gap: 34px;
  height: 70px;
  padding: 14px 28px 0 24px;
  font-size: 24px;
  line-height: 32px;
  white-space: nowrap;
}

.bookmarks a {
  display: flex;
  gap: 12px;
  height: 32px;
}

.bookmarks .long {
  width: 274px;
}

.bookmark-rule {
  width: 4px;
  height: 32px;
  margin: 0 -6px 0 auto;
  background: #0e0f14;
}

/* Page */

.page {
  display: flex;
  flex: 1;
  flex-direction: column;
  align-items: center;
  justify-content: center;
  background: #efefef;
  color: #000;
  font-family: "Liberation Sans", Arial, sans-serif;
}

h1 {
  margin: 42px 0 54px;
  font-size: 64px;
  line-height: 72px;
}

.controls {
  display: flex;
  gap: 20px;
  margin-bottom: 50px;
}

.controls button,
.controls input {
  height: 59px;
  padding: 0 21px;
  border: 2px solid #767676;
  border-radius: 5px;
  background: #efefef;
  color: #000;
  font: 27px "Liberation Sans", Arial, sans-serif;
}

.controls input {
  width: 326px;
  border-radius: 4px;
  background: #fff;
}

.board {
  display: grid;
  grid-template-columns: repeat(5, 124px);
  grid-auto-rows: 124px;
  padding: 20px;
  border-radius: 10px;
  background: #ddd;
}

.cell {
  display: flex;
  align-items: center;
  justify-content: center;
  padding-bottom: 2px;
  border: 2px solid #999;
  background: #fff;
  font-size: 40px;
  font-weight: 700;
}

.cell.piece {
  background: #e6e6e6;
}

.message {
  margin: 40px 0 0;
  font-size: 32px;
  font-weight: 700;
  line-height: 36px;
}

/* Dock */

.dock {
  display: flex;
  align-items: center;
  height: 138px;
  margin: 0 98px;
  padding: 0 4px;
  border: 2px solid #3c3c3c;
  border-radius: 44px;
  background: linear-gradient(90deg, #161616 18%, #262727 30%, #2a2b2b 44%, #1a1a18 51%, #161616 60%, #161616);
  box-shadow: 0 0 110px rgba(0, 0, 0, 0.22);
}

.apps {
  display: grid;
  flex: 1;
  grid-template-columns: repeat(21, 1fr);
}

.app {
  display: flex;
  flex-direction: column;
  align-items: center;
  height: 134px;
  padding-top: 18px;
}

.app svg {
  width: 87px;
  height: 88px;
}

.app.running::after {
  width: 8px;
  height: 8px;
  margin-top: 18px;
  border-radius: 50%;
  background: #9a9a9a;
  content: "";
}

.app.brave {
  --mane: url(#gMane);
  --face: #fff;
}

.app.neon svg {
  border-radius: 20px;
  box-shadow: 0 0 12px rgba(170, 110, 220, 0.7);
}

.app.slot {
  width: 117px;
}

.dock-rule {
  width: 2px;
  height: 102px;
  margin: 0 23px 0 26px;
  background: #4a4a4a;
}

.serif-mark {
  font: 700 52px "Liberation Serif", serif;
}
```
